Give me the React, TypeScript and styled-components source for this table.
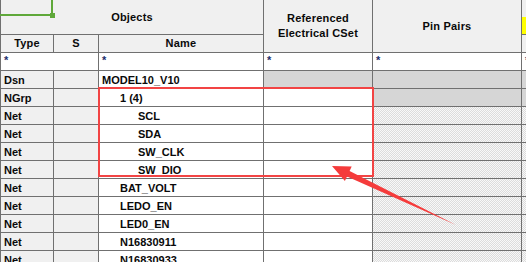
import { Fragment } from 'react';
import styled, { createGlobalStyle, css } from 'styled-components';

const GlobalStyle = createGlobalStyle`
  html, body {
    margin: 0;
    padding: 0;
    overflow: hidden;
    background: #ffffff;
  }
  body {
    font-family: "Liberation Sans", Arial, sans-serif;
  }
`;

const LINE = '#707070';
const HEAD_BG = '#f0f0f0';
const LOCKED_BG = '#d6d6d6';

const hatch = css`
  background: repeating-conic-gradient(#dcdcdc 0 25%, #f8f8f8 0 50%) 0 0 / 2px 2px;
`;

const Page = styled.div`
  position: relative;
  width: 526px;
  height: 262px;
  overflow: hidden;
`;

const Sheet = styled.div`
  display: grid;
  grid-template-columns: 52px 44px 164px 108px 148px 40px;
  grid-template-rows: 34px 17px 17px;
  grid-auto-rows: 17px;
  gap: 1px;
  background: ${LINE};
  border-left: 1px solid ${LINE};
  width: max-content;
  font-size: 11px;
  font-weight: 700;
  color: #0a0a0a;
`;

const HeadCell = styled.div<{ $col: string; $row?: string }>`
  grid-column: ${p => p.$col};
  grid-row: ${p => p.$row ?? 'auto'};
  background: ${HEAD_BG};
  display: flex;
  align-items: center;
  justify-content: center;
  text-align: center;
  line-height: 15px;
  letter-spacing: 0.2px;
`;

const GroupTab = styled.div`
  grid-column: 6;
  grid-row: 1;
  background: ${HEAD_BG};
  display: flex;
  flex-direction: column;
  justify-content: flex-end;
`;

const YellowTab = styled.div`
  height: 17px;
  background: #ffff00;
`;

const FilterCell = styled.div<{ $col: string }>`
  grid-column: ${p => p.$col};
  background: #ffffff;
  padding-left: 3px;
  line-height: 14px;
  color: #1b2f6b;
`;

const Cell = styled.div<{ $tone?: 'head' | 'white' | 'locked' | 'hatch'; $indent?: number }>`
  display: flex;
  align-items: center;
  padding-left: ${p => 3 + (p.$indent ?? 0) * 18}px;
  white-space: nowrap;
  overflow: hidden;
  ${p => {
    switch (p.$tone) {
      case 'head':
        return `background: ${HEAD_BG};`;
      case 'locked':
        return `background: ${LOCKED_BG};`;
      case 'hatch':
        return hatch;
      default:
        return 'background: #ffffff;';
    }
  }}
`;

const SelectedCorner = styled.div`
  position: absolute;
  left: 0;
  top: 0;
  width: 51px;
  height: 14px;
  border-right: 2px solid #5fa83a;
  border-bottom: 2px solid #5fa83a;
`;

const FillHandle = styled.div`
  position: absolute;
  left: 50px;
  top: 13px;
  width: 5px;
  height: 5px;
  background: #5fa83a;
`;

const Highlight = styled.div`
  position: absolute;
  left: 98px;
  top: 87px;
  width: 272px;
  height: 86px;
  border: 2px solid #f24444;
`;

const Overlay = styled.svg`
  position: absolute;
  left: 0;
  top: 0;
  pointer-events: none;
`;

interface Row {
  type: string;
  name: string;
  level: number;
  kind: 'design' | 'group' | 'net';
}

const rows: Row[] = [
  { type: 'Dsn', name: 'MODEL10_V10', level: 0, kind: 'design' },
  { type: 'NGrp', name: '1 (4)', level: 1, kind: 'group' },
  { type: 'Net', name: 'SCL', level: 2, kind: 'net' },
  { type: 'Net', name: 'SDA', level: 2, kind: 'net' },
  { type: 'Net', name: 'SW_CLK', level: 2, kind: 'net' },
  { type: 'Net', name: 'SW_DIO', level: 2, kind: 'net' },
  { type: 'Net', name: 'BAT_VOLT', level: 1, kind: 'net' },
  { type: 'Net', name: 'LEDO_EN', level: 1, kind: 'net' },
  { type: 'Net', name: 'LED0_EN', level: 1, kind: 'net' },
  { type: 'Net', name: 'N16830911', level: 1, kind: 'net' },
  { type: 'Net', name: 'N16830933', level: 1, kind: 'net' },
];

const App = () => {
  return (
    <Page>
      <GlobalStyle />
      <Sheet>
        <HeadCell $col="1 / 4" $row="1">Objects</HeadCell>
        <HeadCell $col="4" $row="1 / 3">
          Referenced
          <br />
          Electrical CSet
        </HeadCell>
        <HeadCell $col="5" $row="1 / 3">Pin Pairs</HeadCell>
        <GroupTab>
          <YellowTab />
        </GroupTab>

        <HeadCell $col="1" $row="2">Type</HeadCell>
        <HeadCell $col="2" $row="2">S</HeadCell>
        <HeadCell $col="3" $row="2">Name</HeadCell>
        <HeadCell $col="6" $row="2" />

        <FilterCell $col="1 / 3">*</FilterCell>
        <FilterCell $col="3">*</FilterCell>
        <FilterCell $col="4">*</FilterCell>
        <FilterCell $col="5">*</FilterCell>
        <FilterCell $col="6">*</FilterCell>

        {rows.map(row => (
          <Fragment key={row.name}>
            <Cell $tone="head">{row.type}</Cell>
            <Cell $tone="head" />
            <Cell $indent={row.level}>{row.name}</Cell>
            <Cell $tone={row.kind === 'design' ? 'locked' : 'white'} />
            <Cell $tone={row.kind === 'net' ? 'hatch' : 'locked'} />
            <Cell $tone={row.kind === 'net' ? 'hatch' : 'locked'} />
          </Fragment>
        ))}
      </Sheet>

      <SelectedCorner />
      <FillHandle />
      <Highlight />
      <Overlay width="526" height="262" viewBox="0 0 526 262">
        <polygon
          points="332,166 351.7,166.5 349.6,171 456,225 347,176.4 344.9,180.9"
          fill="#f53b3b"
        />
      </Overlay>
    </Page>
  );
};

export default App;
